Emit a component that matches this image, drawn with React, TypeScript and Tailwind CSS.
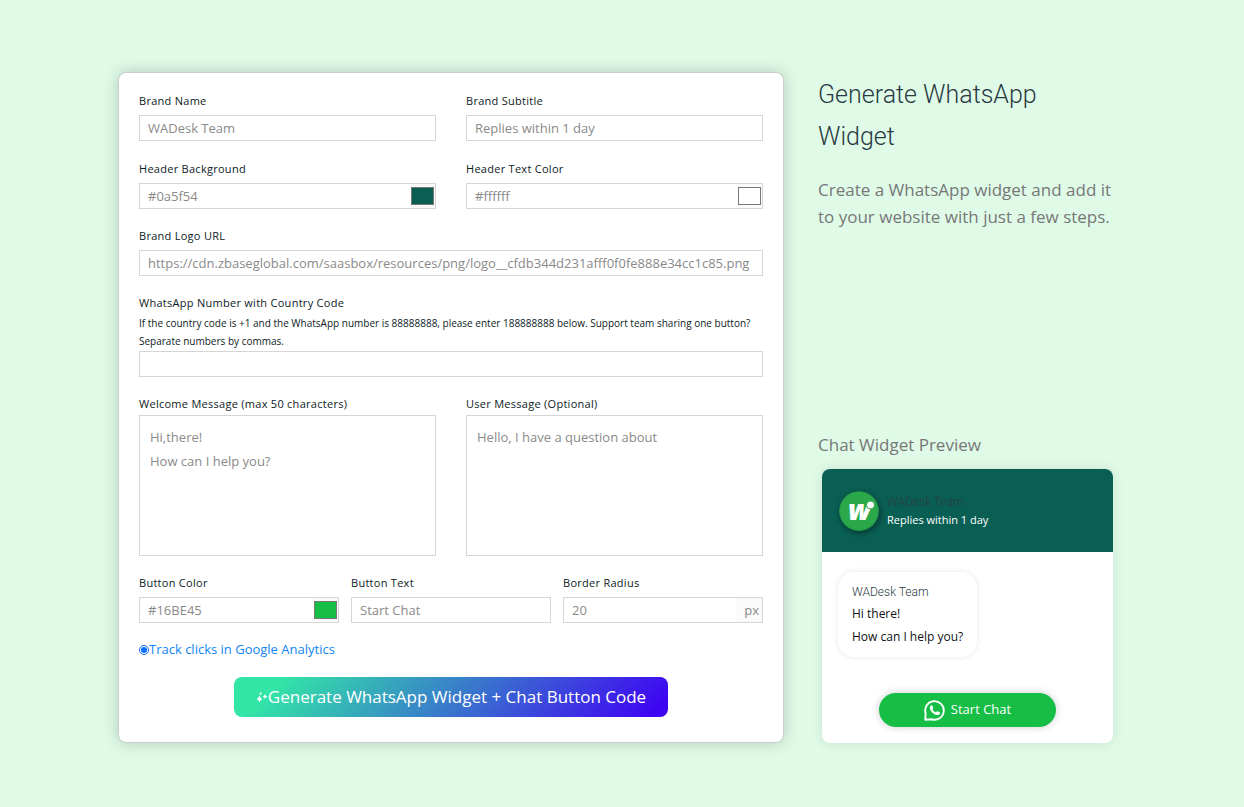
import React, { useState } from "react";

const inputClass =
  "block h-[26px] w-full min-w-0 border border-[#d6d6d6] bg-white px-2 text-[13px] text-[#8a8a8a] outline-none";

const labelClass = "block h-5 text-[11px] leading-5 tracking-wide text-[#0d1b1e]";

const textareaClass =
  "mt-px block h-[141px] w-full resize-none border border-[#d6d6d6] bg-white px-2.5 py-[9px] text-[13px] leading-6 text-[#8a8a8a] outline-none";

type FieldProps = {
  id: string;
  label: string;
  value: string;
  onChange: (value: string) => void;
};

const TextField = ({ id, label, value, onChange }: FieldProps) => (
  <div>
    <label htmlFor={id} className={labelClass}>
      {label}
    </label>
    <input
      id={id}
      type="text"
      className={`${inputClass} mt-1`}
      value={value}
      onChange={(e) => onChange(e.target.value)}
    />
  </div>
);

const ColorField = ({ id, label, value, onChange }: FieldProps) => (
  <div>
    <label htmlFor={id} className={labelClass}>
      {label}
    </label>
    <div className="mt-1 flex h-[26px] items-center border border-[#d6d6d6] bg-white">
      <input
        id={id}
        type="text"
        className="h-full min-w-0 flex-1 px-2 text-[13px] text-[#8a8a8a] outline-none"
        value={value}
        onChange={(e) => onChange(e.target.value)}
      />
      <span className="flex h-full items-center bg-[#fafafa] pr-px">
        <input
          type="color"
          aria-label={`${label} picker`}
          className="h-[18px] w-[23px] appearance-none border-0 bg-transparent p-0 [&::-webkit-color-swatch]:rounded-none [&::-webkit-color-swatch]:border [&::-webkit-color-swatch]:border-solid [&::-webkit-color-swatch]:border-[#777777] [&::-webkit-color-swatch-wrapper]:p-0"
          value={value}
          onChange={(e) => onChange(e.target.value)}
        />
      </span>
    </div>
  </div>
);

const SparkleIcon = () => (
  <svg viewBox="0 0 12 12" className="h-3 w-3" fill="currentColor" aria-hidden="true">
    <path d="M3.5 4.6Q4.3 7.3 6.4 8Q4.3 8.7 3.5 11.2Q2.7 8.7 .6 8Q2.7 7.3 3.5 4.6Z" />
    <path d="M9 3Q9.5 5 11.6 5.5Q9.5 6 9 8Q8.5 6 6.7 5.5Q8.5 5 9 3Z" />
    <path d="M4.5 .7Q4.9 2.1 6 2.5Q4.9 2.9 4.5 4.2Q4.1 2.9 3 2.5Q4.1 2.1 4.5 .7Z" />
  </svg>
);

const WhatsAppIcon = () => (
  <svg viewBox="0 0 21 21" className="h-[21px] w-[21px]" aria-hidden="true">
    <path
      d="M1.3 19.7L1.6 13.2A9.3 9.3 0 1 1 7.6 19.3Z"
      fill="none"
      stroke="currentColor"
      strokeWidth="1.9"
      strokeLinejoin="round"
    />
    <path
      d="M7 5.6c.5-.4 1-.3 1.3.2l.9 1.8c.2.4.1.7-.2 1l-.6.7c.8 1.5 1.9 2.5 3.5 3.2l.9-1c.2-.3.5-.3.9-.2l1.9.9c.5.2.6.6.4 1.2-.5 1.3-1.7 1.8-3 1.6-3.5-.6-6.3-3.3-7-6.6-.2-1.1.2-2.2 1-2.8Z"
      fill="currentColor"
    />
  </svg>
);

const BrandLogo = () => (
  <svg
    viewBox="0 0 40 40"
    className="h-10 w-10 rounded-full shadow-[1px_2px_5px_1px_rgba(0,0,0,0.35)]"
    role="img"
    aria-label="WADesk"
  >
    <circle cx="20" cy="20" r="20" fill="#23934a" />
    <circle cx="20" cy="20" r="19" fill="#2ba84a" />
    <text
      x="9"
      y="29"
      fill="#ffffff"
      fontFamily="'Open Sans', sans-serif"
      fontSize="28"
      fontStyle="italic"
      fontWeight="800"
    >
      w
    </text>
    <circle cx="31.5" cy="14" r="4" fill="#ffffff" stroke="#2ba84a" strokeWidth="1" />
  </svg>
);

export default function App() {
  const [brandName, setBrandName] = useState("WADesk Team");
  const [subtitle, setSubtitle] = useState("Replies within 1 day");
  const [headerBg, setHeaderBg] = useState("#0a5f54");
  const [headerText, setHeaderText] = useState("#ffffff");
  const [logoUrl, setLogoUrl] = useState(
    "https://cdn.zbaseglobal.com/saasbox/resources/png/logo__cfdb344d231afff0f0fe888e34cc1c85.png"
  );
  const [phone, setPhone] = useState("");
  const [buttonColor, setButtonColor] = useState("#16BE45");
  const [buttonText, setButtonText] = useState("Start Chat");
  const [radius, setRadius] = useState("20");

  return (
    <main className="min-h-screen bg-[#dffbe8] px-6 pt-[72px] pb-16 font-['Open_Sans',sans-serif]">
      <div className="mx-auto grid max-w-[1008px] grid-cols-[666fr_308fr] gap-[34px]">
        <form
          className="flex min-w-0 flex-col gap-[17px] rounded-lg border border-[#c8cfca] bg-white px-5 pt-[18px] pb-[25px] shadow-[0_0_16px_rgba(0,0,0,0.2)]"
          onSubmit={(e) => e.preventDefault()}
        >
          <div className="grid grid-cols-2 gap-x-[30px] gap-y-[18px]">
            <TextField id="brandName" label="Brand Name" value={brandName} onChange={setBrandName} />
            <TextField id="subtitle" label="Brand Subtitle" value={subtitle} onChange={setSubtitle} />
            <ColorField id="headerBg" label="Header Background" value={headerBg} onChange={setHeaderBg} />
            <ColorField id="headerText" label="Header Text Color" value={headerText} onChange={setHeaderText} />
          </div>

          <TextField id="logoUrl" label="Brand Logo URL" value={logoUrl} onChange={setLogoUrl} />

          <div>
            <label htmlFor="phone" className={labelClass}>
              WhatsApp Number with Country Code
            </label>
            <p className="my-px text-[10px] leading-[18px] text-[#0d1b1e]">
              If the country code is +1 and the WhatsApp number is 88888888, please enter 188888888 below. Support team
              sharing one button? Separate numbers by commas.
            </p>
            <input
              id="phone"
              type="text"
              className={inputClass}
              value={phone}
              onChange={(e) => setPhone(e.target.value)}
            />
          </div>

          <div className="grid grid-cols-2 gap-x-[30px]">
            <div>
              <label htmlFor="welcome" className={labelClass}>
                Welcome Message (max 50 characters)
              </label>
              <textarea
                id="welcome"
                maxLength={50}
                className={textareaClass}
                defaultValue={"Hi,there!\nHow can I help you?"}
              />
            </div>
            <div>
              <label htmlFor="userMessage" className={labelClass}>
                User Message (Optional)
              </label>
              <textarea id="userMessage" className={textareaClass} defaultValue="Hello, I have a question about" />
            </div>
          </div>

          <div className="grid grid-cols-3 gap-x-3">
            <ColorField id="buttonColor" label="Button Color" value={buttonColor} onChange={setButtonColor} />
            <TextField id="buttonText" label="Button Text" value={buttonText} onChange={setButtonText} />
            <div>
              <label htmlFor="radius" className={labelClass}>
                Border Radius
              </label>
              <div className="mt-1 flex h-[26px] border border-[#d6d6d6] bg-white">
                <input
                  id="radius"
                  type="text"
                  className="h-full min-w-0 flex-1 px-2 text-[13px] text-[#8a8a8a] outline-none"
                  value={radius}
                  onChange={(e) => setRadius(e.target.value)}
                />
                <span className="bg-[#fafafa] pr-[3px] pl-2 text-[13px] leading-6 text-[#8a8a8a]">px</span>
              </div>
            </div>
          </div>

          <label className="flex h-5 items-center text-[13px] text-[#1285f5]">
            <input type="radio" name="track" defaultChecked className="h-[10px] w-[10px] accent-[#0d6efd]" />
            Track clicks in Google Analytics
          </label>

          <button
            type="submit"
            className="flex h-10 items-center self-center rounded-lg bg-[linear-gradient(135deg,#33e6a6_10%,#3f05f3_96%)] px-[22px] text-[17px] text-white"
          >
            <SparkleIcon />
            Generate WhatsApp Widget + Chat Button Code
          </button>
        </form>

        <aside className="flex min-w-0 flex-col pt-0.5">
          <h1 className="font-[Roboto,sans-serif] text-[25px] leading-[42px] font-light text-[#2b3a42]">
            Generate WhatsApp
            <br />
            Widget
          </h1>
          <p className="mt-[18px] text-[17px] leading-[27px] text-[#777777]">
            Create a WhatsApp widget and add it to your website with just a few steps.
          </p>

          <section className="mt-auto">
            <h2 className="text-[17px] leading-[27px] text-[#777777]">Chat Widget Preview</h2>
            <div className="mt-[11px] mr-[13px] ml-1 overflow-hidden rounded-lg bg-white shadow-[0_0_12px_rgba(0,0,0,0.1)]">
              <div className="flex h-[83px] items-center gap-2 px-[17px]" style={{ backgroundColor: headerBg }}>
                <BrandLogo />
                <div>
                  <p className="font-[Roboto,sans-serif] text-[12px] leading-[18px] font-light text-[#2b3a42]">
                    {brandName}
                  </p>
                  <p className="text-[11px] leading-[18px]" style={{ color: headerText }}>
                    {subtitle}
                  </p>
                </div>
              </div>
              <div className="flex flex-col items-start px-4 pt-5 pb-4">
                <div className="h-[85px] rounded-2xl bg-white px-3.5 pt-2.5 shadow-[0_0_6px_rgba(0,0,0,0.1)]">
                  <p className="font-[Roboto,sans-serif] text-[12px] leading-5 font-light text-[#2b3a42]">{brandName}</p>
                  <p className="text-[12px] leading-[23px] text-[#111111]">
                    Hi there!
                    <br />
                    How can I help you?
                  </p>
                </div>
                <button
                  type="button"
                  className="mt-9 flex h-[34px] w-[177px] items-center justify-center gap-1.5 self-center text-[13px] text-white shadow-[0_0_8px_rgba(0,0,0,0.2)]"
                  style={{ backgroundColor: buttonColor, borderRadius: `${radius}px` }}
                >
                  <WhatsAppIcon />
                  {buttonText}
                </button>
              </div>
            </div>
          </section>
        </aside>
      </div>
    </main>
  );
}
